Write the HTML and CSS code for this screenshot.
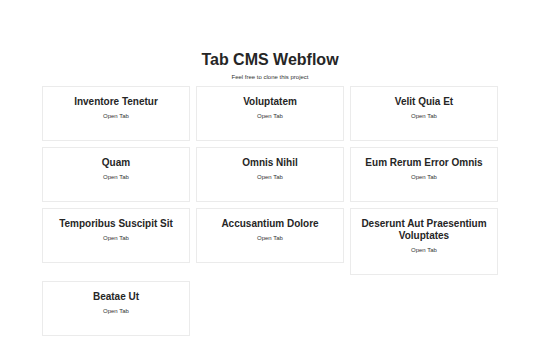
FILE: index.html
```html
<!DOCTYPE html>
<html lang="en">

<head>
    <meta charset="UTF-8">
    <meta name="viewport" content="width=device-width, initial-scale=1.0">
    <title>Tab CMS Webflow</title>
    <link rel="stylesheet" href="styles.css">
</head>

<body>
    <div class="page">
        <h1 class="title">Tab CMS Webflow</h1>
        <p class="subtitle">Feel free to clone this project</p>

        <div class="tab-grid">
            <div class="tab-card">
                <h2 class="tab-name">Inventore Tenetur</h2>
                <a class="tab-link" href="#">Open Tab</a>
            </div>
            <div class="tab-card">
                <h2 class="tab-name">Voluptatem</h2>
                <a class="tab-link" href="#">Open Tab</a>
            </div>
            <div class="tab-card">
                <h2 class="tab-name">Velit Quia Et</h2>
                <a class="tab-link" href="#">Open Tab</a>
            </div>
            <div class="tab-card">
                <h2 class="tab-name">Quam</h2>
                <a class="tab-link" href="#">Open Tab</a>
            </div>
            <div class="tab-card">
                <h2 class="tab-name">Omnis Nihil</h2>
                <a class="tab-link" href="#">Open Tab</a>
            </div>
            <div class="tab-card">
                <h2 class="tab-name">Eum Rerum Error Omnis</h2>
                <a class="tab-link" href="#">Open Tab</a>
            </div>
            <div class="tab-card">
                <h2 class="tab-name">Temporibus Suscipit Sit</h2>
                <a class="tab-link" href="#">Open Tab</a>
            </div>
            <div class="tab-card">
                <h2 class="tab-name">Accusantium Dolore</h2>
                <a class="tab-link" href="#">Open Tab</a>
            </div>
            <div class="tab-card">
                <h2 class="tab-name">Deserunt Aut Praesentium Voluptates</h2>
                <a class="tab-link" href="#">Open Tab</a>
            </div>
            <div class="tab-card">
                <h2 class="tab-name">Beatae Ut</h2>
                <a class="tab-link" href="#">Open Tab</a>
            </div>
        </div>
    </div>
</body>

</html>
```

FILE: styles.css
```css
body {
    margin: 0;
    background-color: white;
    color: #333;
    font-family: "Liberation Sans", Arial, sans-serif;
}

.page {
    width: 456px;
    margin: 0 auto;
    padding-top: 50px;
    text-align: center;
}

.title {
    margin: 0;
    font-size: 16px;
    line-height: 20px;
    font-weight: 700;
    color: #262626;
}

.subtitle {
    margin: 3px 0 0;
    font-size: 6px;
    line-height: 8px;
}

.tab-grid {
    display: grid;
    grid-template-columns: repeat(3, 1fr);
    gap: 6px;
    align-items: start;
    margin-top: 5px;
}

.tab-card {
    border: 1px solid #ebebeb;
    padding: 9px 10px 20px;
}

.tab-name {
    margin: 0;
    font-size: 10px;
    line-height: 12px;
    font-weight: 700;
    color: #262626;
}

.tab-link {
    display: block;
    margin-top: 4px;
    font-size: 6px;
    line-height: 8px;
    color: #333;
    text-decoration: none;
}
```
